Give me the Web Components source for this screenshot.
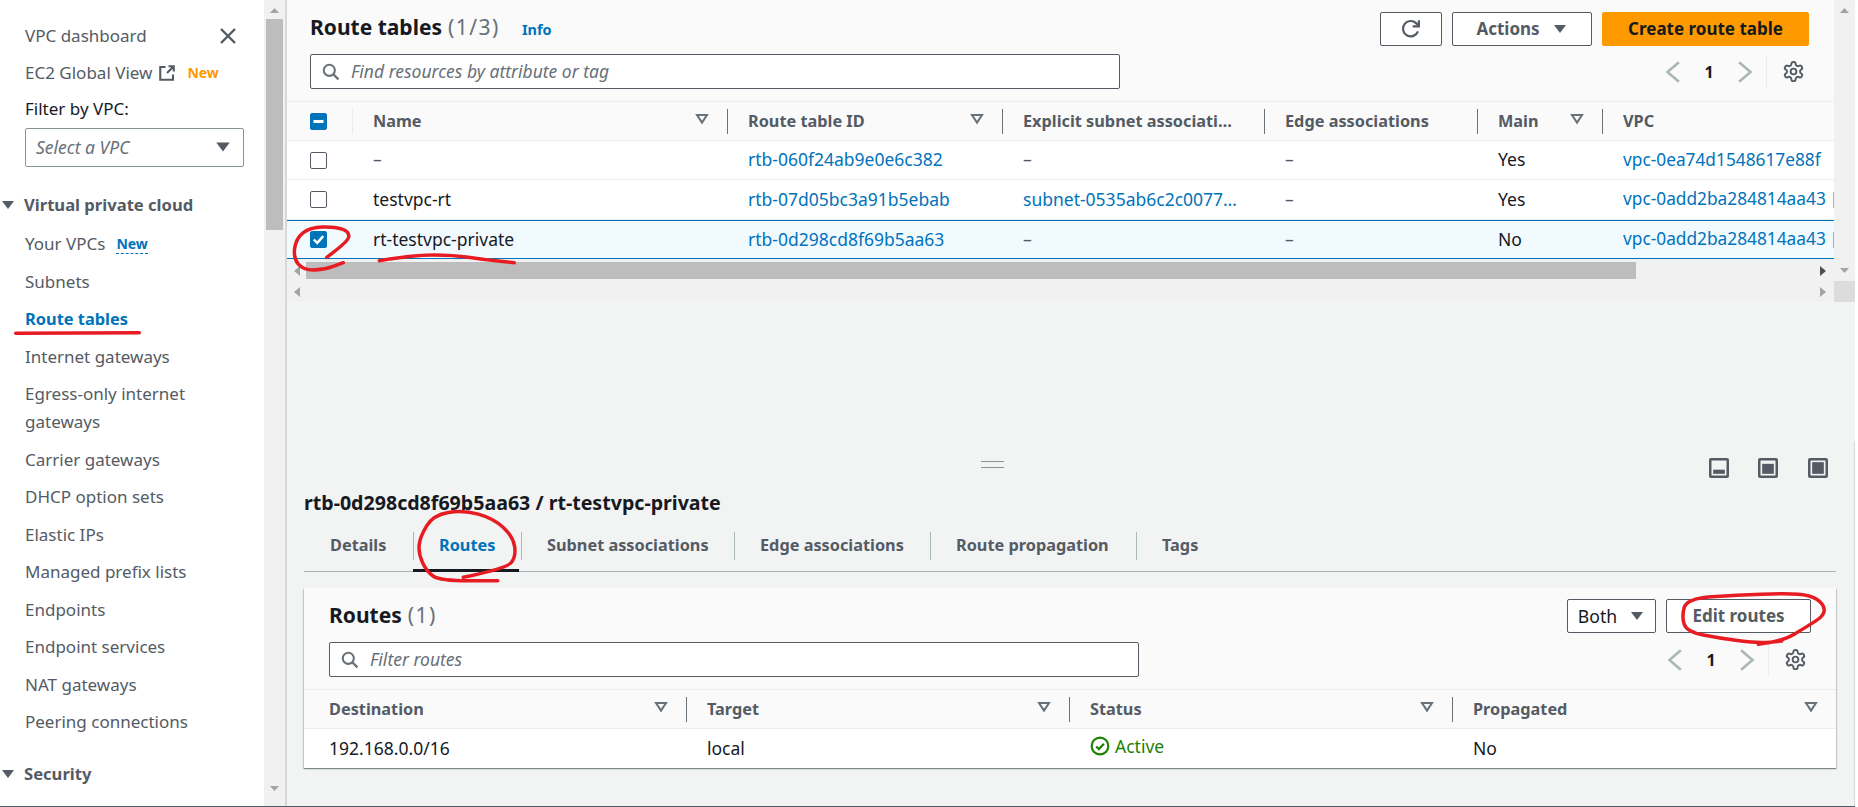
<!doctype html>
<html>
<head>
<meta charset="utf-8">
<title>Route tables</title>
<style>
  html, body { margin: 0; background: #fff; }
  body { font: 16px/22px "Noto Sans", sans-serif; color: #16191f; overflow: hidden; }
  a { color: #0073bb; text-decoration: none; }
  .dash { color: #545b64; }
  .bar { display: inline-block; width: 1px; height: 16px; margin-left: 7px; background: #7fb9dd; vertical-align: -3px; }
  .vpc { font-size: 17.3px; }
  .cols-top { --cols: 65px 375px 275px 262px 213px 125px 232px; }
  .cols-bottom { --cols: 382px 383px 383px 384px; }
</style>
</head>
<body>

<aws-page>
  <aws-sidenav slot="nav">
    <aws-nav-item close>VPC dashboard</aws-nav-item>
    <aws-nav-item><span>EC2 Global View</span><aws-icon name="external" size="18"></aws-icon><aws-new tone="orange">New</aws-new></aws-nav-item>
    <aws-vpc-filter></aws-vpc-filter>
    <aws-nav-head>Virtual private cloud</aws-nav-head>
    <aws-nav-item><span>Your VPCs</span><aws-new tone="blue">New</aws-new></aws-nav-item>
    <aws-nav-item>Subnets</aws-nav-item>
    <aws-nav-item active>Route tables</aws-nav-item>
    <aws-nav-item>Internet gateways</aws-nav-item>
    <aws-nav-item>Egress-only internet gateways</aws-nav-item>
    <aws-nav-item>Carrier gateways</aws-nav-item>
    <aws-nav-item>DHCP option sets</aws-nav-item>
    <aws-nav-item>Elastic IPs</aws-nav-item>
    <aws-nav-item>Managed prefix lists</aws-nav-item>
    <aws-nav-item>Endpoints</aws-nav-item>
    <aws-nav-item>Endpoint services</aws-nav-item>
    <aws-nav-item>NAT gateways</aws-nav-item>
    <aws-nav-item>Peering connections</aws-nav-item>
    <aws-nav-head class="last">Security</aws-nav-head>
  </aws-sidenav>

  <aws-top-pane slot="top">
    <aws-title-bar>
      <aws-heading count="(1/3)" info>Route tables</aws-heading>
      <aws-button slot="actions" wide="62"><aws-icon name="refresh" size="22"></aws-icon></aws-button>
      <aws-button slot="actions" wide="140" caret>Actions</aws-button>
      <aws-button slot="actions" wide="207" primary>Create route table</aws-button>
      <aws-search slot="search" width="810">Find resources by attribute or tag</aws-search>
      <aws-pager slot="pager"></aws-pager>
    </aws-title-bar>
    <aws-tr head class="cols-top">
      <aws-th><aws-check state="mixed"></aws-check></aws-th>
      <aws-th soft sort>Name</aws-th>
      <aws-th sep sort>Route table ID</aws-th>
      <aws-th sep>Explicit subnet associati…</aws-th>
      <aws-th sep>Edge associations</aws-th>
      <aws-th sep sort>Main</aws-th>
      <aws-th sep>VPC</aws-th>
    </aws-tr>
    <aws-tr class="cols-top" style="height:39px">
      <aws-td check><aws-check></aws-check></aws-td>
      <aws-td><span class="dash">–</span></aws-td>
      <aws-td><a>rtb-060f24ab9e0e6c382</a></aws-td>
      <aws-td><span class="dash">–</span></aws-td>
      <aws-td><span class="dash">–</span></aws-td>
      <aws-td>Yes</aws-td>
      <aws-td><a class="vpc">vpc-0ea74d1548617e88f</a></aws-td>
    </aws-tr>
    <aws-tr class="cols-top">
      <aws-td check><aws-check></aws-check></aws-td>
      <aws-td>testvpc-rt</aws-td>
      <aws-td><a>rtb-07d05bc3a91b5ebab</a></aws-td>
      <aws-td><a>subnet-0535ab6c2c0077…</a></aws-td>
      <aws-td><span class="dash">–</span></aws-td>
      <aws-td>Yes</aws-td>
      <aws-td><a class="vpc">vpc-0add2ba284814aa43</a><span class="bar"></span></aws-td>
    </aws-tr>
    <aws-tr class="cols-top" selected>
      <aws-td check><aws-check state="checked"></aws-check></aws-td>
      <aws-td>rt-testvpc-private</aws-td>
      <aws-td><a>rtb-0d298cd8f69b5aa63</a></aws-td>
      <aws-td><span class="dash">–</span></aws-td>
      <aws-td><span class="dash">–</span></aws-td>
      <aws-td>No</aws-td>
      <aws-td><a class="vpc">vpc-0add2ba284814aa43</a><span class="bar"></span></aws-td>
    </aws-tr>
    <aws-hscroll thumb></aws-hscroll>
    <aws-hscroll></aws-hscroll>
  </aws-top-pane>

  <aws-split-panel slot="bottom">
    <aws-split-bar></aws-split-bar>
    <aws-detail-title>rtb-0d298cd8f69b5aa63 / rt-testvpc-private</aws-detail-title>
    <aws-tabs>
      <aws-tab style="width:109px">Details</aws-tab>
      <aws-tab active sep style="width:108px">Routes</aws-tab>
      <aws-tab sep style="width:213px">Subnet associations</aws-tab>
      <aws-tab sep style="width:196px">Edge associations</aws-tab>
      <aws-tab sep style="width:206px">Route propagation</aws-tab>
      <aws-tab sep>Tags</aws-tab>
    </aws-tabs>
    <aws-card>
      <aws-title-bar compact>
        <aws-heading count="(1)">Routes</aws-heading>
        <aws-button slot="actions" wide="89" caret plain>Both</aws-button>
        <aws-button slot="actions" wide="145">Edit routes</aws-button>
        <aws-search slot="search" width="810">Filter routes</aws-search>
        <aws-pager slot="pager"></aws-pager>
      </aws-title-bar>
      <aws-tr head class="cols-bottom">
        <aws-th first sort>Destination</aws-th>
        <aws-th sep sort>Target</aws-th>
        <aws-th sep sort>Status</aws-th>
        <aws-th sep sort>Propagated</aws-th>
      </aws-tr>
      <aws-tr class="cols-bottom" last style="height:39px">
        <aws-td first>192.168.0.0/16</aws-td>
        <aws-td>local</aws-td>
        <aws-td><aws-status>Active</aws-status></aws-td>
        <aws-td>No</aws-td>
      </aws-tr>
    </aws-card>
  </aws-split-panel>
</aws-page>

<red-marks></red-marks>

<script>
const ICONS = {
  close: '<path d="M5 5l14 14M19 5L5 19" fill="none" stroke="currentColor" stroke-width="2.4"/>',
  external: '<path d="M10 4H3v17h17v-7" fill="none" stroke="currentColor" stroke-width="2.8"/><path d="M12 12l9-9M14 3h7v7" fill="none" stroke="currentColor" stroke-width="2.8"/>',
  caret: '<path d="M3 6h18l-9 12z" fill="currentColor"/>',
  sort: '<path d="M4.5 6h15L12 17.5z" fill="none" stroke="currentColor" stroke-width="3"/>',
  search: '<circle cx="10.5" cy="10.5" r="7" fill="none" stroke="currentColor" stroke-width="2.6"/><path d="M15.5 15.5L22 22" fill="none" stroke="currentColor" stroke-width="3"/>',
  refresh: '<path d="M19.6 14.5A8.4 8.4 0 1 1 17.5 5.6L20 8" fill="none" stroke="currentColor" stroke-width="2.4"/><path d="M20.6 2.4v6.8h-6.8" fill="none" stroke="currentColor" stroke-width="2.4"/>',
  left: '<path d="M16.5 3L6 12l10.5 9" fill="none" stroke="currentColor" stroke-width="2.4"/>',
  right: '<path d="M7.5 3L18 12 7.5 21" fill="none" stroke="currentColor" stroke-width="2.4"/>',
  gear: '<path d="M12.22 2h-.44a2 2 0 0 0-2 2v.18a2 2 0 0 1-1 1.73l-.43.25a2 2 0 0 1-2 0l-.15-.08a2 2 0 0 0-2.73.73l-.22.38a2 2 0 0 0 .73 2.73l.15.1a2 2 0 0 1 1 1.72v.51a2 2 0 0 1-1 1.74l-.15.09a2 2 0 0 0-.73 2.73l.22.38a2 2 0 0 0 2.73.73l.15-.08a2 2 0 0 1 2 0l.43.25a2 2 0 0 1 1 1.73V20a2 2 0 0 0 2 2h.44a2 2 0 0 0 2-2v-.18a2 2 0 0 1 1-1.73l.43-.25a2 2 0 0 1 2 0l.15.08a2 2 0 0 0 2.73-.73l.22-.39a2 2 0 0 0-.73-2.73l-.15-.08a2 2 0 0 1-1-1.74v-.5a2 2 0 0 1 1-1.74l.15-.09a2 2 0 0 0 .73-2.73l-.22-.38a2 2 0 0 0-2.73-.73l-.15.08a2 2 0 0 1-2 0l-.43-.25a2 2 0 0 1-1-1.73V4a2 2 0 0 0-2-2z" fill="none" stroke="currentColor" stroke-width="2"/><circle cx="12" cy="12" r="3" fill="none" stroke="currentColor" stroke-width="2"/>',
  panelBottom: '<rect x="1.5" y="1.5" width="21" height="21" rx="1" fill="none" stroke="currentColor" stroke-width="3"/><rect x="5" y="14" width="14" height="5" fill="currentColor"/>',
  panelMid: '<rect x="1.5" y="1.5" width="21" height="21" rx="1" fill="none" stroke="currentColor" stroke-width="3"/><rect x="5" y="7" width="14" height="12" fill="currentColor"/>',
  panelFull: '<rect x="1.5" y="1.5" width="21" height="21" rx="1" fill="none" stroke="currentColor" stroke-width="3"/><rect x="5" y="5" width="14" height="14" fill="currentColor"/>',
  active: '<circle cx="12" cy="12" r="10" fill="none" stroke="currentColor" stroke-width="2.6"/><path d="M7.5 12.5l3.2 3.2 6-6.4" fill="none" stroke="currentColor" stroke-width="2.6"/>'
};

// small helper: same boilerplate for every element
function define(name, css, html, setup) {
  customElements.define(name, class extends HTMLElement {
    constructor() {
      super();
      this.attachShadow({ mode: 'open' });
    }
    connectedCallback() {
      const body = typeof html === 'function' ? html(this) : html;
      this.shadowRoot.innerHTML = `<style>${css}</style>${body}`;
      if (setup) setup(this);
    }
  });
}

const icon = (name, size, color) =>
  `<aws-icon name="${name}" size="${size}" style="color:${color}"></aws-icon>`;

define('aws-icon', ':host{display:inline-flex;flex:none} svg{display:block}', (el) => {
  const size = el.getAttribute('size') || 20;
  return `<svg width="${size}" height="${size}" viewBox="0 0 24 24">${ICONS[el.getAttribute('name')] || ''}</svg>`;
});

define('aws-page', `
  :host{display:grid;grid-template-columns:285px 1570px;grid-template-rows:442px 364px;width:1855px;height:806px;border-bottom:1px solid #545b64}
  ::slotted([slot=nav]){grid-row:1 / 3}
`, '<slot name="nav"></slot><slot name="top"></slot><slot name="bottom"></slot>');

const arrowUp = '<svg width="21" height="19" viewBox="0 0 21 19"><path d="M6 13h9l-4.500-5z" fill="#a3a3a3"/></svg>';
const arrowDown = '<svg width="21" height="19" viewBox="0 0 21 19"><path d="M6 6h9l-4.500 5z" fill="#a3a3a3"/></svg>';

define('aws-sidenav', `
  :host{display:flex;height:806px;overflow:hidden;background:#fff}
  .list{width:264px;padding:17px 0 0 25px;box-sizing:border-box;display:flex;flex-direction:column}
  .track{width:21px;height:806px;background:#f1f1f1;display:flex;flex-direction:column;align-items:center;justify-content:space-between}
  .thumb{width:17px;height:211px;background:#bdbdbd}
  .up{display:flex;flex-direction:column;align-items:center}
`, `<div class="list"><slot></slot></div>
    <div class="track"><div class="up">${arrowUp}<div class="thumb"></div></div><div style="margin-bottom:2px">${arrowDown}</div></div>`);

define('aws-nav-item', `
  :host{display:flex;align-items:center;gap:6px;line-height:28px;padding:4.75px 0;width:202px;color:#545b64;position:relative;font-size:17px}
  :host([active]){color:#0073bb;font-weight:700;font-size:16.4px}
  .x{position:absolute;left:191px;top:7px}
`, (el) => `<slot></slot>${el.hasAttribute('close') ? `<span class="x">${icon('close', 24, '#545b64')}</span>` : ''}`);

define('aws-new', `
  :host{font-size:14px;font-weight:700;line-height:18px;margin-left:5px}
  :host([tone=orange]){color:#ff9900}
  :host([tone=blue]){color:#0073bb;border-bottom:1px dashed #0073bb}
`, '<slot></slot>');

define('aws-vpc-filter', `
  :host{display:block;color:#16191f;font-size:17px}
  .label{line-height:28px;margin-top:3px}
  .box{width:219px;height:39px;margin-top:5px;box-sizing:border-box;border:1px solid #879596;border-radius:2px;background:#fff;display:flex;align-items:center;justify-content:space-between;padding:0 11px 2px 10px;font-style:italic;color:#687078;font-size:17.5px}
`, `<div class="label">Filter by VPC:</div><div class="box"><span>Select a VPC</span>${icon('caret', 18, '#545b64')}</div>`);

define('aws-nav-head', `
  :host{display:flex;align-items:center;gap:8px;margin:24px 0 6.25px -25px;height:28px;font-weight:700;color:#545b64;font-size:16.6px}
  :host(.last){margin-top:19px}
`, `${icon('caret', 16, '#545b64')}<slot></slot>`);

define('aws-top-pane', `
  :host{display:flex;background:#f2f3f3;border-bottom:1px solid #545b64;box-sizing:border-box;height:443px;margin-left:2px;width:1568px;position:relative}
  :host::before{content:"";position:absolute;left:-2px;top:0;width:2px;height:442px;background:#d5dbdb}
  .content{width:1547px;overflow:hidden;background:#f2f3f3}
  .side{width:21px}
  .v{height:281px;background:#f1f1f1;display:flex;flex-direction:column;justify-content:space-between;align-items:center}
  .corner{height:21px;background:#dcdcdc}
`, `<div class="content"><slot></slot></div><div class="side"><div class="v">${arrowUp}${arrowDown}</div><div class="corner"></div></div>`);

define('aws-title-bar', `
  :host{display:block;background:#fafafa;padding:12px 25px 12px 23px;height:101px;box-sizing:border-box}
  :host([compact]){padding:11px 25px 0 25px}
  .r1{display:flex;justify-content:space-between;align-items:center;height:34px}
  .acts{display:flex;gap:10px}
  .r2{display:flex;justify-content:space-between;align-items:center;height:35px;margin-top:8px}
  :host([compact]) .r2{margin-top:9px}
`, `<div class="r1"><slot></slot><div class="acts"><slot name="actions"></slot></div></div>
    <div class="r2"><slot name="search"></slot><slot name="pager"></slot></div>`);

define('aws-heading', `
  :host{display:flex;align-items:baseline;font-size:21px;font-weight:700;color:#16191f;padding-bottom:2px}
  .c{font-weight:400;color:#687078;margin-left:6px;letter-spacing:1.5px}
  .i{font-size:14.5px;color:#0073bb;margin-left:22px}
`, (el) => `<slot></slot><span class="c">${el.getAttribute('count')}</span>${el.hasAttribute('info') ? '<span class="i">Info</span>' : ''}`);

define('aws-button', `
  :host{display:flex;align-items:center;justify-content:center;gap:12px;height:34px;box-sizing:border-box;border:1px solid #545b64;border-radius:2px;background:#fff;color:#545b64;font-weight:700;font-size:17px;padding-bottom:1px}
  :host([primary]){background:#ff9900;border-color:#ff9900;color:#16191f}
  :host([plain]){font-weight:400;color:#16191f;font-size:17.6px}
  aws-icon{margin-top:1px}
`, (el) => `<slot></slot>${el.hasAttribute('caret') ? icon('caret', 16, '#545b64') : ''}`,
  (el) => { el.style.width = el.getAttribute('wide') + 'px'; });

define('aws-search', `
  :host{display:flex;align-items:center;gap:11px;height:35px;box-sizing:border-box;border:1px solid #545b64;border-radius:2px;background:#fff;padding:0 0 1px 10px;font-style:italic;color:#687078;font-size:17.5px}
`, `${icon('search', 19, '#687078')}<slot></slot>`, (el) => { el.style.width = el.getAttribute('width') + 'px'; });

define('aws-pager', `
  :host{display:flex;align-items:center;padding-right:4.5px}
  .n{width:44px;text-align:center;color:#16191f;font-weight:700}
  .sep{width:1px;height:34px;background:#eaeded;margin:0 14.5px 0 9px}
`, `${icon('left', 26, '#aab7b8')}<span class="n">1</span>${icon('right', 26, '#aab7b8')}<span class="sep"></span>${icon('gear', 23, '#545b64')}`);

define('aws-tr', `
  :host{display:grid;grid-template-columns:var(--cols);height:40px;box-sizing:border-box;border-bottom:1px solid #eaeded;background:#fff;align-items:center}
  :host([head]){height:38px;border-top:1px solid #eaeded;background:#fafafa;box-sizing:content-box}
  :host([selected]){height:39px;background:#f1faff;border-top:1px solid #0073bb;border-bottom:1px solid #0073bb}
  :host([last]){border-bottom:none}
`, '<slot></slot>');

define('aws-th', `
  :host{display:flex;align-items:center;height:100%;font-weight:700;color:#545b64;position:relative;padding:0 16px 0 21px;font-size:16.3px;box-sizing:border-box;white-space:nowrap}
  :host([first]){padding-left:25px}
  :host([sep])::before,:host([soft])::before{content:"";position:absolute;left:0;top:7px;height:25px;width:1px;background:#687078}
  :host([soft])::before{background:#eaeded}
  .s{margin-left:auto;padding-right:1px}
  :host(:first-child){padding-left:23px}
  :host([first]:first-child){padding-left:25px}
`, (el) => `<slot></slot>${el.hasAttribute('sort') ? `<span class="s">${icon('sort', 16, '#687078')}</span>` : ''}`);

define('aws-td', `
  :host{display:block;padding:0 0 2px 21px;white-space:nowrap;overflow:hidden;font-size:17.5px}
  :host([first]){padding-left:25px}
  :host([check]){padding:0 0 0 23px;line-height:0}
`, '<slot></slot>');

define('aws-check', `
  :host{display:inline-block;width:17px;height:17px;box-sizing:border-box;border:1px solid #545b64;border-radius:2px;background:#fff;vertical-align:middle}
  :host([state]){background:#0073bb;border-color:#0073bb}
  svg{display:block}
`, (el) => {
  const s = el.getAttribute('state');
  if (s === 'mixed') return '<svg width="15" height="15" viewBox="0 0 15 15"><path d="M2.500 7.500h10" stroke="#fff" stroke-width="3"/></svg>';
  if (s === 'checked') return '<svg width="15" height="15" viewBox="0 0 15 15"><path d="M2.800 7.500l3.400 3.400 6-6.800" fill="none" stroke="#fff" stroke-width="2.400"/></svg>';
  return '';
});

define('aws-hscroll', `
  :host{display:flex;align-items:center;height:21px;background:#f1f1f1;position:relative}
  .thumb{position:absolute;left:19px;width:1330px;height:17px;top:3px;background:#bdbdbd}
  svg{position:absolute;top:7px}
`, (el) => {
  const c = el.hasAttribute('thumb') ? '#505050' : '#a3a3a3';
  return `<svg style="left:5px" width="10" height="10" viewBox="0 0 10 10"><path d="M8 0v10L2 5z" fill="#a3a3a3"/></svg>
    ${el.hasAttribute('thumb') ? '<div class="thumb"></div>' : ''}
    <svg style="right:6px" width="10" height="10" viewBox="0 0 10 10"><path d="M2 0v10l6-5z" fill="${c}"/></svg>`;
});

define('aws-split-panel', `
  :host{display:block;background:#f2f3f3;padding:0 19px 0 17px;height:364px;box-sizing:border-box;position:relative;border-left:2px solid #d5dbdb;border-right:1px solid #d5dbdb;width:1570px}
`, '<slot></slot>');

define('aws-split-bar', `
  :host{display:block;height:36px;position:relative}
  .h{position:absolute;left:677px;top:19px;width:23px;height:5px;border-top:1px solid #879596;border-bottom:1px solid #879596}
  .ic{position:absolute;top:16px;display:block}
`, `<div class="h"></div>
    <span class="ic" style="left:1405px">${icon('panelBottom', 20, '#545b64')}</span>
    <span class="ic" style="left:1454px">${icon('panelMid', 20, '#545b64')}</span>
    <span class="ic" style="left:1504px">${icon('panelFull', 20, '#545b64')}</span>`);

define('aws-detail-title', `
  :host{display:block;font-size:19.6px;font-weight:700;line-height:24px;color:#16191f;margin-top:13px}
`, '<slot></slot>');

define('aws-tabs', `
  :host{display:flex;height:45px;margin:11px 0 16px;border-bottom:1px solid #aab7b8;width:1532px;align-items:stretch}
`, '<slot></slot>');

define('aws-tab', `
  :host{display:flex;align-items:center;padding-left:26px;box-sizing:border-box;font-weight:700;font-size:16.3px;color:#545b64;position:relative;white-space:nowrap}
  :host([sep])::before{content:"";position:absolute;left:0;top:6px;height:28px;width:1px;background:#aab7b8}
  :host([active]){color:#0073bb}
  :host([active])::after{content:"";position:absolute;left:0;right:2px;bottom:-1px;height:3px;background:#16191f}
  span{position:relative;top:-4px}
`, '<span><slot></slot></span>');

define('aws-card', `
  :host{display:block;width:1532px;background:#fafafa;box-shadow:0 1px 1px 0 rgba(0,28,36,.3),1px 1px 1px 0 rgba(0,28,36,.15),-1px 1px 1px 0 rgba(0,28,36,.15)}
`, '<slot></slot>');

define('aws-status', `
  :host{display:inline-flex;align-items:center;gap:5px;color:#1d8102}
`, `${icon('active', 20, '#1d8102')}<slot></slot>`);

// red pen annotations, drawn over the screenshot
const MARKS = [
  [[326.7, 257.3], [348.3, 241.7], [349.3, 231.7], [335, 226.7], [310, 227.3], [296, 238.3], [293.3, 258.3], [303.3, 270], [323.3, 270], [343.3, 262.7]],
  [[379.3, 260.7], [413.3, 255], [453.3, 255], [486.7, 260], [514.3, 262.7]],
  [[15.7, 333.3], [139.3, 332.8]],
  [[463.3, 577.3], [506.7, 568.3], [516, 556.7], [513.3, 536.7], [493.3, 518.3], [463.3, 510], [433.3, 515], [420, 536.7], [418.3, 553.3], [426.7, 571.7], [440, 580.7], [497.7, 580.7]],
  [[1758.3, 644.3], [1781.7, 641.7], [1806.7, 626.7], [1825, 615], [1823.3, 603.3], [1810, 595], [1786.7, 593.3], [1736.7, 595], [1686.7, 598.3], [1681.7, 616.7], [1686.7, 631.7], [1720, 638.3], [1758.3, 643.3], [1781.7, 641]]
];

function smooth(points) {
  let d = `M${points[0][0]} ${points[0][1]}`;
  for (let i = 1; i < points.length - 1; i++) {
    const mx = (points[i][0] + points[i + 1][0]) / 2;
    const my = (points[i][1] + points[i + 1][1]) / 2;
    d += ` Q${points[i][0]} ${points[i][1]} ${mx} ${my}`;
  }
  const end = points[points.length - 1];
  return `${d} L${end[0]} ${end[1]}`;
}

define('red-marks', `
  :host{position:absolute;left:0;top:0;width:1858px;height:807px;pointer-events:none}
  svg{display:block}
`, `<svg width="1858" height="807">${MARKS.map((m) => `<path d="${smooth(m)}" fill="none" stroke="#e71c23" stroke-width="3.5" stroke-linecap="round" stroke-linejoin="round"/>`).join('')}</svg>`);
</script>
</body>
</html>
